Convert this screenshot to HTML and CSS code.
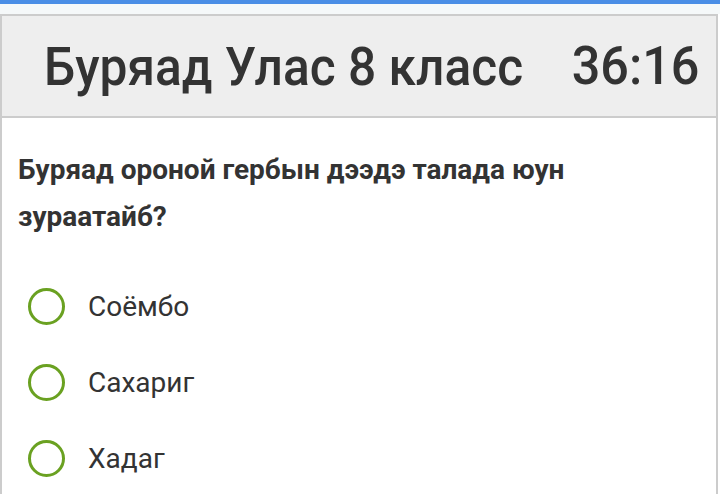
FILE: index.html
```html
<!DOCTYPE html>
<html lang="ru">

<head>
    <meta charset="UTF-8">
    <meta name="viewport" content="width=device-width, initial-scale=1.0">
    <title>Буряад Улас 8 класс</title>
    <link rel="stylesheet" href="styles.css">
</head>

<body>
    <div class="topbar"></div>
    <div class="quiz">
        <div class="quiz-head">
            <h1 class="quiz-title">Буряад Улас 8 класс</h1>
            <span class="timer" id="timer">36:16</span>
        </div>
        <div class="quiz-body">
            <p class="question">Буряад ороной гербын дээдэ талада юун зураатайб?</p>
            <label class="option">
                <input type="radio" name="q1" value="1">
                <span class="mark"></span>
                <span class="option-text">Соёмбо</span>
            </label>
            <label class="option">
                <input type="radio" name="q1" value="2">
                <span class="mark"></span>
                <span class="option-text">Сахариг</span>
            </label>
            <label class="option">
                <input type="radio" name="q1" value="3">
                <span class="mark"></span>
                <span class="option-text">Хадаг</span>
            </label>
        </div>
    </div>
</body>

</html>
```

FILE: styles.css
```css
html,
body {
    margin: 0;
    padding: 0;
    height: 100%;
    overflow: hidden;
    background: #ffffff;
    font-family: Roboto, "Noto Sans", sans-serif;
    color: #333333;
}

.topbar {
    height: 4px;
    background: #4a8ee6;
    border-bottom: 10px solid #f5f8f9;
}

.quiz {
    width: 714px;
    border: 2px solid #cccccc;
    border-bottom: none;
    min-height: 480px;
}

.quiz-head {
    display: flex;
    align-items: center;
    justify-content: space-between;
    height: 100px;
    padding: 0 19px 0 42px;
    background: #eeeeee;
    border-bottom: 2px solid #cccccc;
    white-space: nowrap;
}

/* header font is drawn slightly narrow */
.quiz-title {
    margin: 0;
    font-size: 54px;
    font-weight: 500;
    transform: scaleX(0.92);
    transform-origin: left center;
}

.timer {
    font-size: 53px;
    font-weight: 500;
    transform: scaleX(0.95);
    transform-origin: right center;
}

.quiz-body {
    padding: 28px 16px 0 16px;
}

.question {
    margin: 0 0 28px 0;
    font-size: 28px;
    font-weight: 700;
    line-height: 47px;
    max-width: 600px;
}

.option {
    display: flex;
    align-items: center;
    height: 76px;
    cursor: pointer;
}

.option input {
    display: none;
}

.mark {
    box-sizing: border-box;
    width: 37px;
    height: 37px;
    margin-left: 10px;
    border: 3px solid #6aa121;
    border-radius: 50%;
}

.option input:checked + .mark {
    background: radial-gradient(#6aa121 40%, transparent 45%);
}

.option-text {
    margin-left: 23px;
    font-size: 28px;
}
```
